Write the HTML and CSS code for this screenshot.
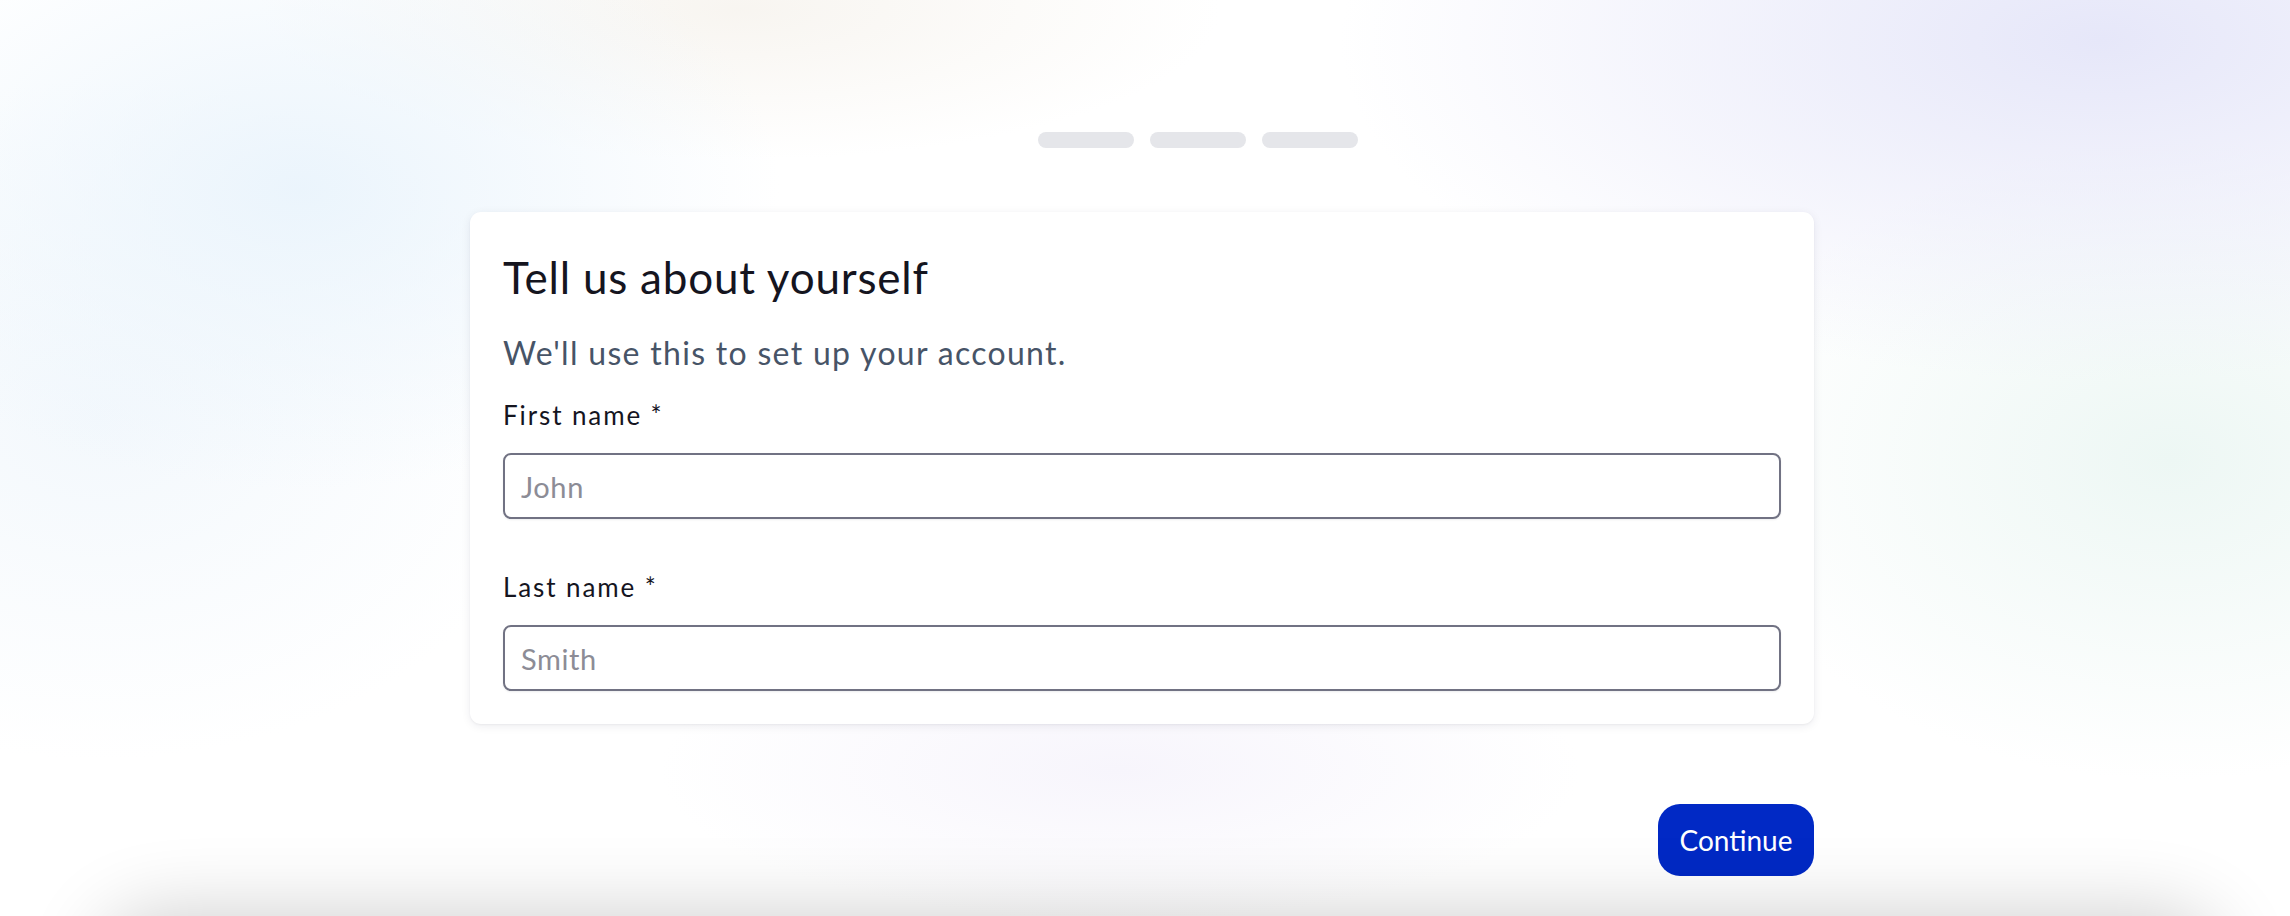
FILE: index.html
```html
<!DOCTYPE html>
<html lang="en">
<head>
<meta charset="utf-8">
<title>Tell us about yourself</title>
<link rel="stylesheet" href="styles.css">
</head>
<body>
<div class="page">
  <main class="onboarding">
    <div class="steps" aria-label="Progress">
      <span class="step"></span>
      <span class="step"></span>
      <span class="step"></span>
    </div>
    <form class="card">
      <h1 class="card-title">Tell us about yourself</h1>
      <p class="card-subtitle">We'll use this to set up your account.</p>
      <label class="field">
        <span class="field-label">First name *</span>
        <input class="field-input" type="text" placeholder="John">
      </label>
      <label class="field field-last">
        <span class="field-label">Last name *</span>
        <input class="field-input" type="text" placeholder="Smith">
      </label>
    </form>
    <div class="actions">
      <button class="btn-primary" type="button">Continue</button>
    </div>
  </main>
</div>
<div class="bottom-shade"></div>
</body>
</html>
```

FILE: styles.css
```css
* { box-sizing: border-box; }

html, body {
  margin: 0;
  height: 100%;
}

body {
  overflow: hidden;
  font-family: "Lato", "Noto Sans", sans-serif;
  color: #15151f;
  background-color: #ffffff;
  background-image:
    radial-gradient(ellipse 480px 300px at 300px 190px, rgba(234, 244, 252, 0.95), rgba(234, 244, 252, 0) 100%),
    radial-gradient(ellipse 480px 150px at 740px 10px, rgba(247, 244, 239, 0.9), rgba(247, 244, 239, 0) 100%),
    radial-gradient(ellipse 760px 340px at 2100px 40px, rgba(230, 231, 249, 1), rgba(230, 231, 249, 0) 100%),
    radial-gradient(ellipse 460px 320px at 2170px 460px, rgba(237, 247, 244, 1), rgba(237, 247, 244, 0) 100%),
    radial-gradient(ellipse 460px 150px at 1120px 770px, rgba(247, 245, 252, 1), rgba(247, 245, 252, 0) 100%),
    radial-gradient(ellipse 460px 340px at 100px 420px, rgba(241, 247, 252, 0.85), rgba(241, 247, 252, 0) 100%);
}

.page {
  display: flex;
  justify-content: center;
  padding-right: 6px;
}

.onboarding {
  width: 1344px;
  padding-top: 132px;
  display: flex;
  flex-direction: column;
}

.steps {
  display: flex;
  gap: 16px;
  margin-left: 568px;
}

.step {
  width: 96px;
  height: 16px;
  border-radius: 8px;
  background: #e5e6ea;
}

.card {
  margin: 64px 0 0;
  background: #ffffff;
  border-radius: 11px;
  box-shadow: 0 2px 10px rgba(30, 30, 60, 0.08), 0 1px 2px rgba(30, 30, 60, 0.05);
  padding: 37px 33px 33px 33px;
  display: flex;
  flex-direction: column;
}

.card-title {
  margin: 0;
  font-size: 44px;
  line-height: 56px;
  font-weight: 400;
  letter-spacing: 0.8px;
  color: #15151f;
}

.card-subtitle {
  margin: 26px 0 0;
  font-size: 32px;
  line-height: 44px;
  letter-spacing: 1.3px;
  color: #475467;
}

.field {
  display: flex;
  flex-direction: column;
  margin-top: 22px;
}

.field-last {
  margin-top: 50px;
}

.field-label {
  font-size: 26px;
  line-height: 36px;
  letter-spacing: 1.9px;
  color: #15151f;
}

.field-input {
  margin-top: 20px;
  height: 66px;
  width: 100%;
  border: 2px solid #717283;
  border-radius: 8px;
  padding: 0 16px;
  font-family: inherit;
  font-size: 29px;
  letter-spacing: 0.6px;
  color: #15151f;
  background: #ffffff;
  box-shadow: 0 1px 2px rgba(16, 24, 40, 0.08);
  outline: none;
}

.field-input::placeholder {
  color: #8c8c96;
}

.actions {
  display: flex;
  justify-content: flex-end;
  margin-top: 80px;
}

.btn-primary {
  width: 156px;
  height: 72px;
  border: none;
  border-radius: 22px;
  background: #0129c5;
  color: #ffffff;
  font-family: inherit;
  font-size: 28px;
  padding: 0;
  cursor: pointer;
}

.bottom-shade {
  position: fixed;
  left: 130px;
  right: 100px;
  top: 945px;
  height: 60px;
  border-radius: 60px;
  box-shadow: 0 0 80px 30px rgba(0, 0, 0, 0.2);
  pointer-events: none;
}
```
